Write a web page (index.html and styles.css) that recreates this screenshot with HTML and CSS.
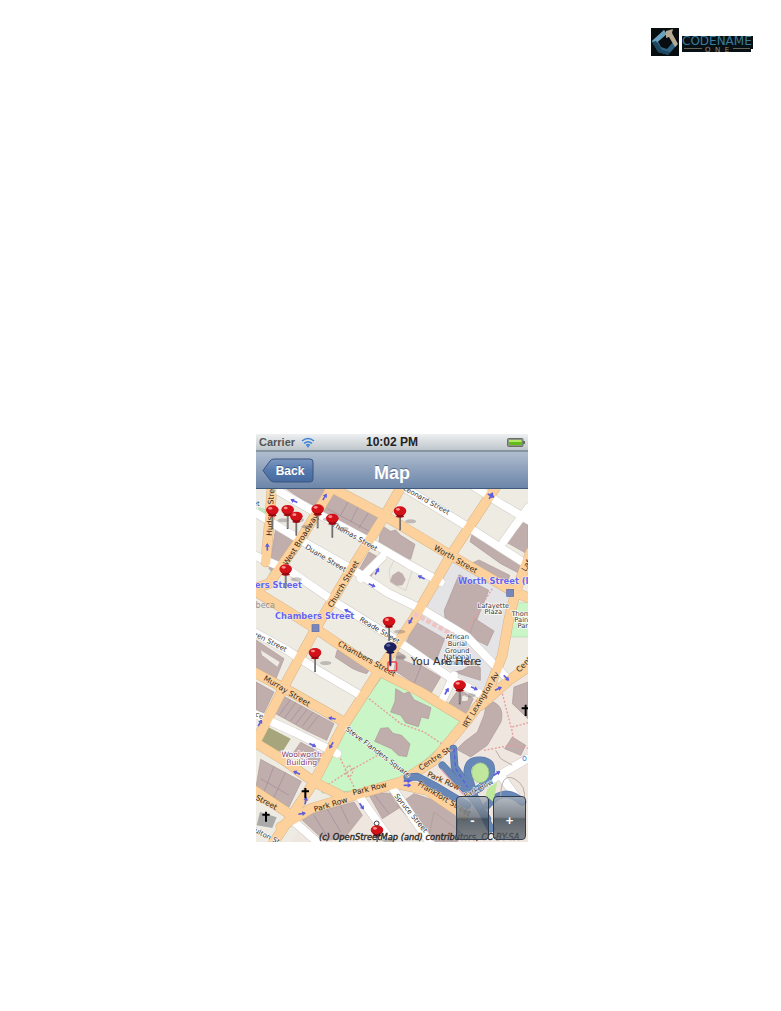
FILE: index.html
```html
<!DOCTYPE html>
<html lang="en">
<head>
<meta charset="utf-8">
<title>Map</title>
<link rel="stylesheet" href="styles.css">
</head>
<body>
<header class="page-header">
  <svg class="logo" viewBox="0 0 102 28" role="img" aria-label="Codename One">
    <rect width="28" height="28" fill="#080d10"/>
    <path d="M13 2 1 13l6 11 10 3 9-10-3-4-7 8-6-2-3-6 8-7z" fill="#2d6282"/>
    <path d="M13 2 1 13l2 4 13-11z" fill="#6aa2bd"/>
    <path d="M1 14l6 10 10 3 2-3-8-2-6-9z" fill="#1d475f"/>
    <path d="M15 3l7-2-1 4 6 11-3 3-6-10-3 1z" fill="#b5aa91"/>
    <rect x="31" y="8" width="71" height="13" fill="#071015"/>
    <rect x="31" y="19" width="69" height="5" fill="#071015"/>
    <text class="logo-name" x="31" y="17">CODENAME</text>
    <path d="M33 20.500h18M82 20.500h17" stroke="#686252"/>
    <text class="logo-one" x="54" y="24">O  N  E</text>
  </svg>
</header>
<main class="stage">
  <section class="phone">
    <div class="status">
      <span class="carrier">Carrier
        <svg class="wifi" viewBox="0 0 14 11" fill="none" stroke="#3c83d6" stroke-width="1.600"><path d="M1 4q6-5 12 0M3 6.500q4-3.500 8 0M5.200 8.500q1.800-1.600 3.600 0"/><circle cx="7" cy="9.500" r="1" fill="#3c83d6" stroke="none"/></svg>
      </span>
      <span class="clock">10:02 PM</span>
      <svg class="battery" viewBox="0 0 18 9"><rect x=".5" y=".5" width="15.500" height="8" rx="1" fill="#8c9484" stroke="#687064"/><rect x="2" y="2" width="12.500" height="5" fill="#62bd18"/><path d="M2 3h12.500" stroke="#b2ea62" stroke-width="2"/><path d="M17 3v3" stroke="#687064" stroke-width="2"/></svg>
    </div>
    <div class="nav">
      <button class="back" type="button">
        <svg viewBox="0 0 52 25" aria-hidden="true"><defs><linearGradient id="bk" x2="0" y2="1"><stop stop-color="#7c98bf"/><stop offset=".5" stop-color="#5679ad"/><stop offset="1" stop-color="#456a9f"/></linearGradient></defs><path d="M1 12.500 8 3q1.500-2 4-2h36q3 0 3 3v17q0 3-3 3H12q-2.500 0-4-2z" fill="url(#bk)" stroke="#3c557c"/></svg>
        <span>Back</span>
      </button>
      <h1 class="title">Map</h1>
    </div>
    <div class="map">
      <svg class="tiles" viewBox="6 171 816 1059" role="img" aria-label="Street map of Lower Manhattan">
        <defs>
          <g id="pinshape"><ellipse cx="32" cy="30" rx="17" ry="6" fill="#766e6e" opacity=".4"/><path d="M0 8v49" stroke="#555" stroke-width="5"/><path d="M-1 10v44" stroke="#aaa" stroke-width="2"/></g>
          <g id="pin"><use href="#pinshape"/><path d="M-8 9q-1 6-5 7 13 6 26 0-4-1-5-7z" fill="#a50a10"/><ellipse cy="-1" rx="19" ry="14" fill="#d21118"/><path d="M-16 5q16 14 32 0-5 11-16 11T-16 5z" fill="#8f0911"/><ellipse cx="-6" cy="-6" rx="6" ry="4" fill="#ff8c8c"/></g>
          <g id="arrow" fill="none" stroke="#5d5ddf" stroke-width="5"><path d="M-11 0h20"/><path d="M1-7l11 7-11 7z" fill="#5d5ddf" stroke="none"/></g>
          <g id="white">
            <path d="M70 175 200 250 340 325 460 395 560 450"/><path d="M0 240 150 330 300 415 400 482 510 535 640 615 765 745"/>
            <path d="M0 370 110 418 240 508 430 626 600 745 705 800"/><path d="M0 600 100 655 200 720 320 790"/><path d="M0 845 120 900 250 965"/>
            <path d="M440 160 650 290 830 405"/><path d="M640 150 740 215 830 268"/><path d="M825 225 780 285 748 330"/><path d="M320 440 385 375"/><path d="M600 730 560 815"/>
            <path d="M110 1160 190 1230"/><path d="M310 1085 400 1210"/><path d="M410 1060 530 1235"/><path d="M650 1080 820 980"/><path d="M740 1030 790 1100"/>
          </g>
          <g id="orange">
            <path d="M55 150 48 250 35 390"/><path d="M250 140 150 305 45 455 0 470"/><path d="M450 150 390 255 280 430 185 590 100 745 0 940"/>
            <path d="M735 150 590 370 480 560 370 725 260 895 180 1050 50 1245"/><path d="M200 150 390 250 590 370 780 480 830 500"/>
            <path d="M0 475 185 590 370 715 500 780 640 865"/><path d="M0 720 120 785 270 870"/><path d="M0 930 90 985 180 1050 260 1090"/><path d="M0 1075 105 1145"/>
            <path d="M80 1185 170 1130 300 1090 440 1050 540 985 635 870 700 785 745 670 765 560 785 480 830 360"/><path d="M830 700 765 745 680 820"/><path d="M430 1055 520 1075 630 1150"/>
          </g>
          <g id="blue"><path d="M460 1036 490 1034 540 1060 640 1120M565 1000 650 1090 700 1160M598 950 602 1005 660 1090 710 1190"/><path d="M655 1070 640 1022Q640 982 680 985T710 1025Q695 1060 665 1075"/><path d="M700 1120Q750 1060 805 1110"/></g>
        </defs>
        <rect x="0" y="165" width="830" height="1070" fill="#eeebe3"/>
        <path d="M590 380 770 490 740 650 700 785 490 650 470 560z" fill="#e4e3e5"/>
        <path d="M625 870 740 770 830 710V1235H110L170 1130 450 1060z" fill="#efe7df"/>
        <g fill="#bfaeac" stroke="#ad9998" stroke-width="2">
          <path d="M90 165H225L190 225 140 200z"/><path d="M240 183 375 252 332 328 205 248z"/><path d="M65 290 125 325 60 425 45 410z"/>
          <path d="M390 285 410 298 425 294 440 310 483 337 470 382 445 374 430 365 415 367 374 342 377 310z"/><path d="M345 360 381 380 344 446 311 420z"/>
          <path d="M655 305 815 390 801 427 740 395 648 329z"/><path d="M675 384 767 430 760 457 650 395z"/><path d="M788 262 822 280V367L756 330z"/>
          <path d="M615 428 704 475 650 610 600 590 573 560 571 535z"/><path d="M663 560 720 597 700 641 645 613z"/>
          <path d="M485 570 572 620 540 702 455 635z"/><path d="M430 658 560 735 530 786 420 715z"/>
          <path d="M250 653 350 707 338 725 315 718 296 710 244 676z"/><path d="M0 620 90 680 65 742 0 703z"/>
          <path d="M90 793 240 875 218 925 155 895 60 842z"/><path d="M6 750 60 780 30 842 6 835z"/><path d="M140 931 207 966 192 1005 115 967z"/>
          <path d="M20 982 142 1048 105 1125 65 1100 6 1065z"/><path d="M135 1155 300 1110 325 1150 270 1220 210 1225z"/><path d="M340 1080 420 1085 440 1125 385 1160z"/>
          <path d="M625 715 640 705 662 692 679 707 679 745 600 720z"/><path d="M615 770 658 800 635 850 580 820z"/><path d="M700 805Q755 815 741 870L700 940 650 975 608 952 630 930 670 900 690 850z"/>
          <path d="M780 765 822 750V860L775 815z"/><path d="M775 915 815 940 800 970 752 950z"/><path d="M480 1085 570 1115 610 1160V1235H530L430 1120z"/><path d="M540 1140 620 1200 600 1235H520z"/>
        </g>
        <g fill="#eeebe3"><path d="M420 385 475 415 455 475 410 452 405 415z" stroke="#cfc8c0" stroke-width="2"/><path d="M455 667 492 690 487 700 450 685z"/><path d="M20 655 77 690 70 704 25 670z"/><path d="M625 792 645 785 640 806 624 807z"/></g>
        <path d="M433 418 446 425 455 443 445 460 427 461 408 448 415 430z" fill="#bfaeac"/>
        <g fill="none" stroke="#a48798" stroke-width="2"><path d="M220 230 350 300M285 205 260 250M315 220 290 270M345 240 315 288M109 803 75 850M125 811 92 858M143 822 110 867M160 832 125 876M177 841 144 884M195 850 160 893M20 1040 105 1090M60 1002 30 1080M95 1021 60 1095M180 1150 220 1215M220 1132 260 1200M260 1122 285 1175M510 680 480 755M355 1080 405 1145"/></g>
        <path d="M387 730 480 775 628 866 600 908 540 960 450 1040 330 1075 205 1083 187 1050 260 910z" fill="#caf5c6" stroke="#9bc796" stroke-width="2"/>
        <g fill="#bfaeac" stroke="#ad9998" stroke-width="2"><path d="M425 770 450 785 465 779 480 803 531 827 523 860 502 855 493 884 455 872 440 850 410 840 423 808z"/><path d="M380 889 403 887 417 904 443 910 468 936 458 974 433 970 412 950 362 928z"/></g>
        <path d="M32 880 110 920 85 960 8 942z" fill="#a7a57c"/><path d="M770 515 830 510V615H765z" fill="#caf5c6" stroke="#9bc796"/><path d="M15 225 38 232 32 248 6 240zM48 418 65 421 50 445 40 440z" fill="#bde6bf"/>
        <g fill="none" stroke="#e79b9d" stroke-width="4" stroke-dasharray="6 5"><path d="M345 800 440 875 510 900 578 945M245 950 300 1065M205 1070 280 1020 380 965M285 1000q22 18 0 36q-22-18 0-36M715 470 625 610 600 700M745 785 775 900 780 940 830 950M690 955 780 938M775 885 830 870"/></g>
        <g fill="none" stroke-linejoin="round" stroke-linecap="round">
          <use href="#white" stroke="#cfcac5" stroke-width="27"/><use href="#orange" stroke="#d6b58a" stroke-width="31"/>
          <use href="#white" stroke="#fff" stroke-width="24"/><use href="#orange" stroke="#fdd19b" stroke-width="28"/>
        </g>
        <path d="M480 545 600 610" fill="none" stroke="#efc4c4" stroke-width="14" stroke-dasharray="15 6"/>
        <g fill="none" stroke-linejoin="round" stroke-linecap="round">
          <use href="#blue" stroke="#5777a8" stroke-width="23"/><use href="#blue" stroke="#6787b8" stroke-width="19"/>
        </g>
        <path d="M600 950 605 1010 640 1065M660 1030q-10-40 30-35" fill="none" stroke="#5d5ddf" stroke-width="4" stroke-dasharray="12 8"/>
        <path d="M560 1010 630 1090" stroke="#dfa3a8" stroke-width="4"/>
        <ellipse cx="679" cy="1022" rx="26" ry="30" fill="#bfe89c" stroke="#92b980" stroke-width="2"/><path d="M700 1070 730 1050 718 1110 695 1090z" fill="#bfe89c"/>
        <use href="#arrow" transform="translate(120 207) rotate(205)"/><use href="#arrow" transform="translate(212 195) rotate(-60)"/><use href="#arrow" transform="translate(40 345) rotate(-90)"/>
        <use href="#arrow" transform="translate(369 418) rotate(-60)"/><use href="#arrow" transform="translate(354 460) rotate(25)"/><use href="#arrow" transform="translate(502 436) rotate(205)"/>
        <use href="#arrow" transform="translate(711 191) rotate(25)"/><use href="#arrow" transform="translate(711 191) rotate(-60)"/><use href="#arrow" transform="translate(470 566) rotate(120)"/><use href="#arrow" transform="translate(281 537) rotate(205)"/>
        <use href="#arrow" transform="translate(578 778) rotate(-60)"/><use href="#arrow" transform="translate(661 769) rotate(25)"/><use href="#arrow" transform="translate(757 738) rotate(45)"/><use href="#arrow" transform="translate(733 770) rotate(-25)"/>
        <use href="#arrow" transform="translate(234 859) rotate(190)"/><use href="#arrow" transform="translate(232 940) rotate(120)"/><use href="#arrow" transform="translate(176 939) rotate(25)"/><use href="#arrow" transform="translate(128 1022) rotate(205)"/>
        <use href="#arrow" transform="translate(18 873) rotate(-60)"/><use href="#arrow" transform="translate(144 1145) rotate(-10)"/><use href="#arrow" transform="translate(155 1106) rotate(-80)"/><use href="#arrow" transform="translate(323 1123) rotate(55)"/><use href="#arrow" transform="translate(460 1047)"/><use href="#arrow" transform="translate(460 1060)"/><use href="#arrow" transform="translate(729 1024) rotate(-30)"/>
        <g fill="#7787b9" stroke="#5c6caa" stroke-width="2"><rect x="174" y="578" width="21" height="21"/><rect x="758" y="472" width="21" height="21"/></g>
        <g class="street">
          <text transform="translate(53 312) rotate(-87)">Hudson Street</text>
          <text transform="translate(100 402) rotate(-58)">West Broadway</text>
          <text transform="translate(234 528) rotate(-59)">Church Street</text>
          <text transform="translate(538 352) rotate(30)">Worth Street</text>
          <text transform="translate(250 640) rotate(29)">Chambers Street</text>
          <text transform="translate(27 743) rotate(31)">Murray Street</text>
          <text transform="translate(-28 1085) rotate(28)">ay Street</text>
          <text transform="translate(182 1140) rotate(-17)">Park Row</text>
          <text transform="translate(298 1090) rotate(-14)">Park Row</text>
          <text transform="translate(500 1016) rotate(-33)">Centre St.</text>
          <text transform="translate(518 1032) rotate(24)">Park Row</text>
          <text transform="translate(490 1060) rotate(31)">Frankfort Street</text>
          <text transform="translate(638 889) rotate(-59)">IRT Lexington Av</text>
          <text transform="translate(796 722) rotate(-45)">Centre</text>
          <text transform="translate(815 420) rotate(-60)">Lafayette</text>
        </g>
        <g class="lane">
          <text transform="translate(232 281) rotate(30)">Thomas Street</text>
          <text transform="translate(152 349) rotate(31)">Duane Street</text>
          <text transform="translate(446 173) rotate(29)">Leonard Street</text>
          <text transform="translate(315 566) rotate(31)">Reade Street</text>
          <text transform="translate(-36 594) rotate(27)">Warren Street</text>
          <text transform="translate(-25 835) rotate(29)">Place</text>
          <text transform="translate(273 894) rotate(37)">Steve Flanders Square</text>
          <text transform="translate(420 1092) rotate(51)">Spruce Street</text>
          <text transform="translate(-10 1195) rotate(27)">Fulton St.</text>
          <text transform="translate(634 1098) rotate(-27)">Park Row</text>
          <text x="-4" y="222">et</text>
        </g>
        <g class="station"><text x="63" y="560">Chambers Street</text><text x="-94" y="467">Chambers Street</text><text x="612" y="457">Worth Street (IRT)</text></g>
        <text class="district" x="-2" y="528">ibeca</text>
        <g class="place" text-anchor="middle"><text x="718" y="529">Lafayette</text><text x="718" y="547">Plaza</text><text x="610" y="622">African</text><text x="610" y="642">Burial</text><text x="610" y="662">Ground</text><text x="610" y="682">National</text><text x="614" y="700">Monument</text><text x="812" y="553">Thomas</text><text x="808" y="570">Paine</text><text x="812" y="588">Park</text></g>
        <g class="building" text-anchor="middle"><text x="143" y="976">Woolworth</text><text x="143" y="1000">Building</text></g>
        <path d="M18 1140 68 1156 55 1188 8 1180z" fill="#aaa"/>
        <path d="M154 1068v31M143 1078h22M36 1139v30M25 1148h22M815 818v34M803 829h24" stroke="#000" stroke-width="6"/>
        <text x="804" y="986" fill="#4a83d6" font-size="24">o</text>
        <g fill="none" stroke="#b8b0a8" stroke-width="3"><path d="M740 1100Q740 1020 780 1040T810 1110M725 955l15 25 35 20"/></g>
        <rect x="402" y="690" width="26" height="26" rx="3" fill="none" stroke="#ed3e44" stroke-width="4"/>
        <text class="here" x="470" y="699">You Are Here</text>
        <use href="#pin" x="55" y="235"/><use href="#pin" x="101" y="234"/><use href="#pin" x="127" y="254"/><use href="#pin" x="191" y="232"/><use href="#pin" x="235" y="260"/><use href="#pin" x="438" y="238"/><use href="#pin" x="95" y="412"/><use href="#pin" x="405" y="569"/><use href="#pin" x="183" y="663"/><use href="#pin" x="617" y="760"/><use href="#pin" x="369" y="1195"/>
        <circle cx="368" cy="1174" r="7" fill="none" stroke="#444" stroke-width="3"/>
        <g transform="translate(409 646)"><use href="#pinshape"/><path d="M0 8v46" stroke="#252866" stroke-width="6"/><path d="M-8 9q-1 6-5 7 13 6 26 0-4-1-5-7z" fill="#12164c"/><ellipse cy="-1" rx="19" ry="14" fill="#1b205f"/><ellipse cx="-6" cy="-6" rx="6" ry="4" fill="#5c629f"/></g>
        <text class="credit" x="195" y="1224">(c) OpenStreetMap (and) contributors, CC-BY-SA</text>
      </svg>
      <div class="zoom">
        <button type="button" aria-label="Zoom out">-</button>
        <button type="button" aria-label="Zoom in">+</button>
      </div>
    </div>
  </section>
</main>
</body>
</html>
```
FILE: styles.css
```css
body { margin: 0; background: #fff; font-family: "Liberation Sans", Arial, sans-serif; }
.page-header { display: flex; justify-content: flex-end; padding: 28px 28px 0; }
.logo { width: 102px; height: 28px; }
.logo-name { font: 12px "DejaVu Sans", sans-serif; fill: #3b7c9c; }
.logo-one { font: 7px "DejaVu Sans", sans-serif; fill: #9b917b; white-space: pre; }
.stage { display: flex; justify-content: center; padding: 378px 0 32px 3px; }
.phone { width: 272px; }

.status { display: grid; grid-template-columns: 1fr auto 1fr; align-items: center; height: 16px; padding: 0 3px; box-sizing: border-box; font-size: 11px; font-weight: bold; color: #222; background: linear-gradient(#eef0f1, #bfc6cb); }
.carrier { display: flex; align-items: center; gap: 6px; color: #555; }
.clock { font-size: 12px; line-height: 16px; }
.wifi { width: 14px; height: 11px; }
.battery { width: 18px; height: 9px; justify-self: end; }

.nav { display: grid; grid-template-columns: 1fr auto 1fr; align-items: center; height: 39px; padding: 0 6px; box-sizing: border-box; border-top: 2px solid #8693a2; border-bottom: 1px solid #40587c; background: linear-gradient(#afbdcf, #8da0bb 50%, #6c86aa); }
.back { position: relative; width: 52px; height: 25px; padding: 0 0 0 4px; border: 0; background: none; color: #fff; font: bold 12px "Liberation Sans", sans-serif; text-shadow: 0 -1px #405c88; }
.back svg { position: absolute; inset: 0; width: 100%; height: 100%; }
.back span { position: relative; top: 1px; }
.title { margin: 0; padding-top: 6px; font-size: 18px; line-height: 20px; color: #fff; text-shadow: 0 -1px #596d8b; }

.map { position: relative; }
.tiles { display: block; width: 100%; height: auto; overflow: hidden; font-family: "DejaVu Sans", sans-serif; }
.street { font-size: 23px; fill: #30281d; stroke: #fdd19b; stroke-width: 2px; paint-order: stroke; }
.lane { font-size: 21px; fill: #35332f; stroke: #fff; stroke-width: 3px; paint-order: stroke; }
.station { font-size: 25px; font-weight: bold; fill: #6464ee; stroke: #fff; stroke-width: 2px; paint-order: stroke; }
.district { font-size: 24px; fill: #929292; }
.place { font-size: 20px; fill: #333; stroke: #fff; stroke-width: 4px; paint-order: stroke; }
.building { font-size: 23px; fill: #83406e; stroke: #fff; stroke-width: 5px; paint-order: stroke; }
.here { font-size: 33px; fill: #303030; }
.credit { font-size: 25px; font-style: oblique; fill: #252525; stroke: #252525; stroke-width: 1px; }
.zoom { position: absolute; right: 2px; bottom: 2px; display: flex; gap: 4px; }
.zoom button { width: 33px; height: 44px; padding: 4px 0 0; border: 1px solid #303d4c; border-radius: 4px; background: linear-gradient(rgba(165, 175, 186, 0.8), rgba(98, 109, 120, 0.8) 48%, rgba(55, 68, 80, 0.8) 52%, rgba(87, 96, 104, 0.75)); color: #fff; font: bold 13px "Liberation Sans", sans-serif; }
```
